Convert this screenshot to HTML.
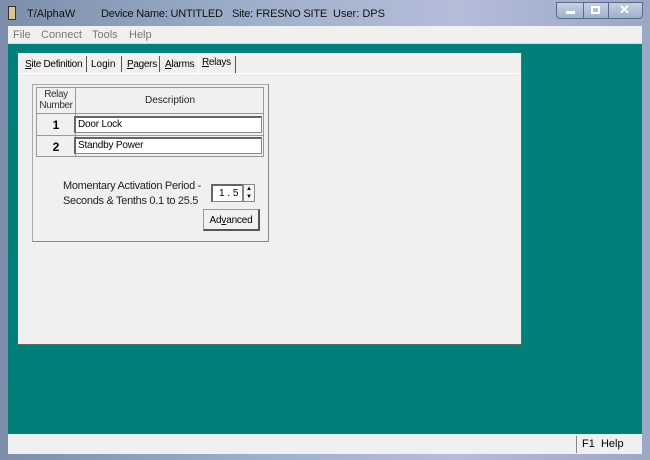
<!DOCTYPE html>
<html><head><style>
*{margin:0;padding:0;box-sizing:border-box}
body{width:650px;height:460px;overflow:hidden;font-family:"Liberation Sans",sans-serif;font-size:11px;background:#8e9fba;position:relative}
.a{position:absolute;white-space:nowrap}
</style></head><body>
<div class="a" style="left:0;top:0;width:650px;height:460px;background:linear-gradient(90deg,#7d8eab,#9fb0cc 40%,#b4bdd9 70%,#9aa8c4);"></div>
<div class="a" style="left:8px;top:6px;width:8px;height:14px;background:#d8c890;border:1px solid #333"></div>
<div class="a" style="left:27px;top:8px;font-size:11px;color:#111">T/AlphaW</div>
<div class="a" style="left:101px;top:8px;font-size:11px;color:#111;letter-spacing:-0.2px">Device Name: UNTITLED</div>
<div class="a" style="left:232px;top:8px;font-size:11px;color:#111;letter-spacing:-0.2px">Site: FRESNO SITE</div>
<div class="a" style="left:333px;top:8px;font-size:11px;color:#111">User: DPS</div>
<div class="a" style="left:556px;top:2px;width:87px;height:17px;border:1px solid #5a6a88;border-radius:0 0 4px 4px;background:linear-gradient(#c4d0e4,#9fb0cc)"></div>
<div class="a" style="left:583px;top:2px;width:1px;height:17px;background:#5a6a88"></div>
<div class="a" style="left:608px;top:2px;width:1px;height:17px;background:#5a6a88"></div>
<div class="a" style="left:566px;top:11px;width:9px;height:3px;background:#fff"></div>
<div class="a" style="left:591px;top:6px;width:9px;height:8px;border:2px solid #fff"></div>
<div class="a" style="left:619px;top:2px;font-size:13px;font-weight:bold;color:#fff">✕</div>
<div class="a" style="left:8px;top:26px;width:634px;height:18px;background:#f0f0f0;border-bottom:1px solid #d0dae8"></div>
<div class="a" style="left:13px;top:29px;color:#777;font-size:11px">File</div>
<div class="a" style="left:41px;top:29px;color:#777;font-size:11px">Connect</div>
<div class="a" style="left:92px;top:29px;color:#777;font-size:11px">Tools</div>
<div class="a" style="left:129px;top:29px;color:#777;font-size:11px">Help</div>
<div class="a" style="left:8px;top:44px;width:634px;height:390px;background:#007f7b"></div>
<div class="a" style="left:18px;top:53px;width:504px;height:292px;background:#f0f0f0;border-right:1px solid #666;border-bottom:1px solid #666"></div>
<div class="a" style="left:18px;top:73px;width:503px;height:1px;background:#fff"></div>
<div class="a" style="left:25px;top:59px;font-size:10px;letter-spacing:-0.3px;color:#000"><u>S</u>ite Definition</div>
<div class="a" style="left:86px;top:56px;width:1px;height:16px;background:#555"></div>
<div class="a" style="left:91px;top:59px;font-size:10px">Login</div>
<div class="a" style="left:121px;top:56px;width:1px;height:16px;background:#555"></div>
<div class="a" style="left:127px;top:59px;font-size:10px;letter-spacing:-0.3px"><u>P</u>agers</div>
<div class="a" style="left:159px;top:56px;width:1px;height:16px;background:#555"></div>
<div class="a" style="left:165px;top:59px;font-size:10px;letter-spacing:-0.3px"><u>A</u>larms</div>
<div class="a" style="left:198px;top:56px;width:1px;height:18px;background:#fff"></div>
<div class="a" style="left:202px;top:57px;font-size:10px;letter-spacing:-0.3px"><u>R</u>elays</div>
<div class="a" style="left:235px;top:56px;width:1px;height:17px;background:#555"></div>
<div class="a" style="left:32px;top:84px;width:237px;height:158px;border:1px solid #aaa;border-right-color:#888;border-bottom-color:#888;background:#f0f0f0"></div>
<div class="a" style="left:36px;top:87px;width:228px;height:70px;border:1px solid #999;background:#f0f0f0"></div>
<div class="a" style="left:75px;top:87px;width:1px;height:70px;background:#999"></div>
<div class="a" style="left:36px;top:113px;width:228px;height:1px;background:#999"></div>
<div class="a" style="left:36px;top:135px;width:228px;height:1px;background:#999"></div>
<div class="a" style="left:37px;top:89px;width:38px;text-align:center;font-size:10px;line-height:11px;color:#333;letter-spacing:-0.4px">Relay<br>Number</div>
<div class="a" style="left:76px;top:95px;width:188px;text-align:center;color:#222;font-size:10px">Description</div>
<div class="a" style="left:37px;top:118px;width:38px;text-align:center;font-weight:bold;font-size:12px">1</div>
<div class="a" style="left:37px;top:140px;width:38px;text-align:center;font-weight:bold;font-size:12px">2</div>
<div class="a" style="left:74px;top:116px;width:188px;height:17px;background:#fff;border:1px solid #888;border-top:2px solid #666;border-left:2px solid #666;padding:1px 2px;font-size:10px;letter-spacing:-0.2px">Door Lock</div>
<div class="a" style="left:74px;top:137px;width:188px;height:17px;background:#fff;border:1px solid #888;border-top:2px solid #666;border-left:2px solid #666;padding:1px 2px;font-size:10px;letter-spacing:-0.2px">Standby Power</div>
<div class="a" style="left:63px;top:179px;font-size:11px;line-height:15px;color:#222;letter-spacing:-0.3px">Momentary Activation Period -<br>Seconds &amp; Tenths 0.1 to 25.5</div>
<div class="a" style="left:211px;top:184px;width:32px;height:18px;background:#fff;border:1px solid #888;border-top:2px solid #666;border-left:2px solid #666;padding:2px 0 0 6px;font-size:10px">1 . 5</div>
<div class="a" style="left:243px;top:184px;width:12px;height:18px;background:#f4f4f4;border:1px solid #888;font-size:6px;line-height:8px;text-align:center">▲<br>▼</div>
<div class="a" style="left:203px;top:209px;width:57px;height:22px;border:1px solid #999;border-right:2px solid #555;border-bottom:2px solid #555;background:#f0f0f0;text-align:center;padding-top:5px;font-size:10px;letter-spacing:-0.2px">Ad<u>v</u>anced</div>
<div class="a" style="left:8px;top:434px;width:634px;height:20px;background:#f0f0f0;border-top:1px solid #cfe"></div>
<div class="a" style="left:576px;top:436px;width:1px;height:17px;background:#888"></div>
<div class="a" style="left:582px;top:438px;font-size:11px">F1&nbsp;&nbsp;Help</div>
</body></html>
